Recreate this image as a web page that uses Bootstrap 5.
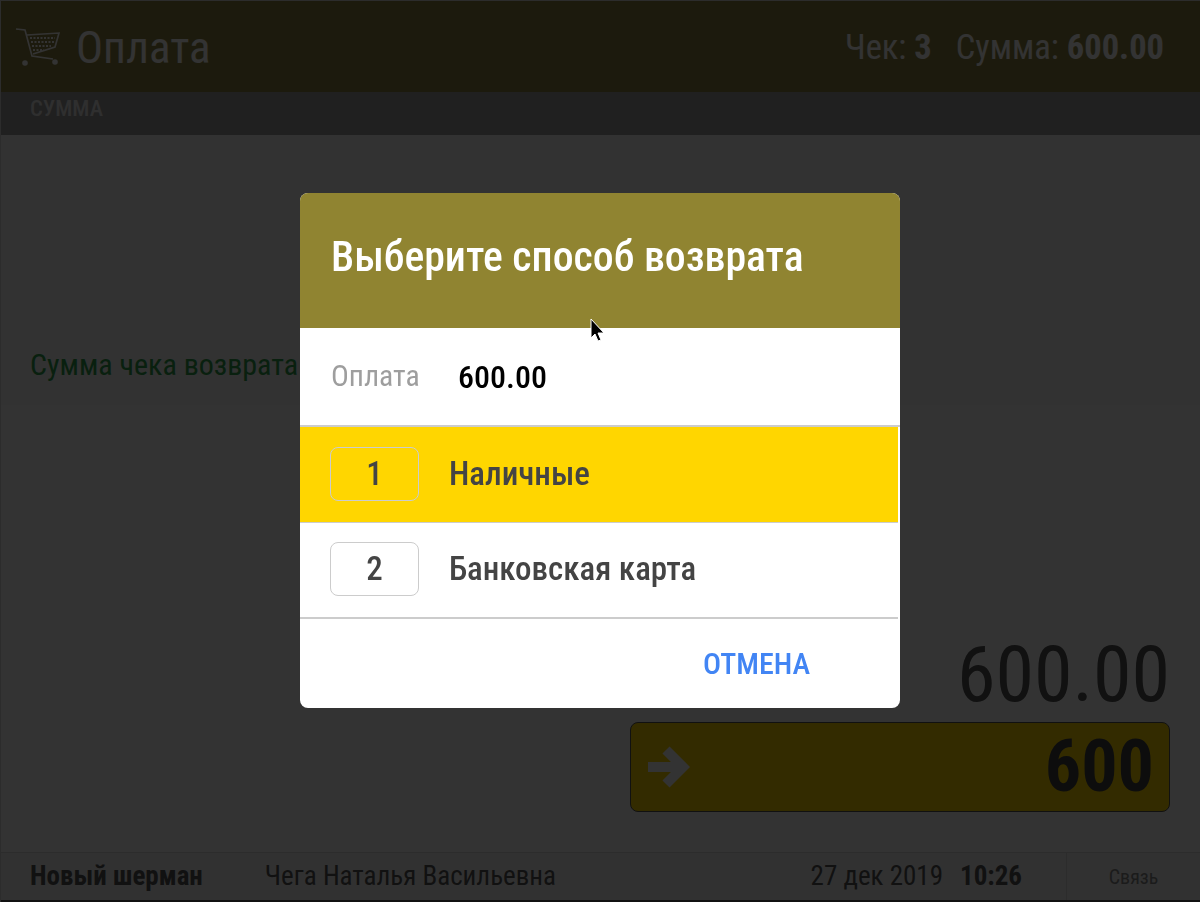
<!DOCTYPE html>
<html lang="ru">
<head>
  <meta charset="UTF-8">
  <meta name="viewport" content="width=device-width, initial-scale=1.0">
  <title>Оплата</title>
  <link href="https://cdn.jsdelivr.net/npm/bootstrap@5.3.0/dist/css/bootstrap.min.css" rel="stylesheet">
  <style>
    html, body { height: 100%; }
    body { font-family: "Roboto Condensed", Roboto, "Liberation Sans", sans-serif; font-stretch: condensed; background: #fff; overflow: hidden; }
    .pay-page { height: 902px; border-top: 1px solid #ddd; border-left: 1px solid #ddd; }
    .pay-top { height: 91px; background: #8e8441; color: #fff; padding: 3px 36px 0 14px; font-size: 34.5px; }
    .pay-top svg { width: 46px; height: 38px; margin-top: -3px; }
    .pay-title { font-size: 45px; margin-left: 15px; }
    .pay-tab { height: 43px; background: #9e9e9e; color: #e8e8e8; padding: 0 0 10px 29px; font-size: 22.6px; font-weight: 500; }
    .pay-upper { height: 270px; padding: 0 29px 18px; background: #f8f8f8; }
    .pay-hint { color: #2e9e4a; font-size: 30px; }
    .pay-lower { padding: 0 30px 40px; background: #fff; }
    .pay-amount { font-size: 78px; line-height: 1; color: #555; }
    .pay-input { width: 540px; height: 90px; background: #ffd600; border: 1px solid #555; border-radius: 8px; padding: 0 15px; }
    .pay-input b { font-size: 72px; color: #444; font-weight: 700; }
    .pay-foot { height: 50px; background: #f5f5f5; border-top: 1px solid #ddd; border-bottom: 2px solid #555; color: #555; padding-left: 29px; font-size: 27px; }
    .pay-name { margin-right: 62px; }
    .pay-time { margin: 0 44px 0 17px; }
    .pay-link { width: 134px; border-left: 1px solid #ddd; font-size: 20px; color: #888; }
    .pay-backdrop { position: fixed; inset: 0; background: rgba(0,0,0,.8); }
    .pay-dialog { position: fixed; left: 300px; top: 193px; width: 600px; height: 515px; background: #fff; border-radius: 8px; overflow: hidden; }
    .pay-dialog-head { height: 135px; background: #908431; color: #fff; font-size: 41.8px; font-weight: 500; padding: 0 0 6px 31px; }
    .pay-sum { height: 99px; padding-left: 31px; border-bottom: 2px solid #ccc; }
    .pay-sum span { width: 127px; color: #9e9e9e; font-size: 29.7px; }
    .pay-sum b { font-size: 32px; color: #000; font-weight: 500; }
    .pay-opt { height: 96px; width: 598px; padding: 0 0 2px 30px; font-size: 33px; font-weight: 500; color: #444; border-bottom: 2px solid #ccc; }
    .pay-opt.is-on { background: #ffd600; border-bottom-width: 1px; }
    .pay-key { width: 89px; height: 54px; margin-right: 30px; border: 1px solid #ccc; border-radius: 8px; }
    .pay-cancel { flex: 1; padding-left: 403px; color: #4285f4; font-size: 30px; font-weight: 500; }
    .pay-cursor { position: fixed; left: 590px; top: 318px; width: 15px; height: 25px; }
  </style>
</head>
<body>
  <div class="pay-page d-flex flex-column">
    <div class="pay-top d-flex align-items-center">
      <svg viewBox="0 0 46 38" fill="none" stroke="#fff" stroke-width="1.6">
        <path d="M1 1l9 1 7 26 21 3"/>
        <path d="M12 7l32-2-4 14-22 7"/>
        <path d="M15 10h25M16 14h23M17 18h19M18 22h11" stroke-dasharray="2 1.5" stroke-width="2"/>
        <circle cx="10" cy="35" r="2" fill="#fff"/><circle cx="40" cy="34" r="2" fill="#fff"/>
      </svg>
      <div class="pay-title">Оплата</div>
      <div class="ms-auto d-flex gap-4">
        <div>Чек: <b>3</b></div>
        <div>Сумма: <b>600.00</b></div>
      </div>
    </div>
    <div class="pay-tab d-flex align-items-center">СУММА</div>
    <div class="pay-upper d-flex align-items-end">
      <div class="pay-hint">Сумма чека возврата</div>
    </div>
    <div class="pay-lower flex-grow-1 d-flex flex-column align-items-end justify-content-end">
      <div class="pay-amount mb-2">600.00</div>
      <div class="pay-input d-flex align-items-center justify-content-between">
        <svg width="44" height="44" viewBox="0 0 44 44" fill="none" stroke="#fff" stroke-width="10" stroke-linejoin="miter"><path d="M2 22h32M20 5l17 17-17 17"/></svg>
        <b>600</b>
      </div>
    </div>
    <div class="pay-foot d-flex align-items-center">
      <b class="pay-name">Новый шерман</b>
      <span>Чега Наталья Васильевна</span>
      <span class="ms-auto">27 дек 2019</span>
      <b class="pay-time">10:26</b>
      <div class="pay-link h-100 d-flex align-items-center justify-content-center">Связь</div>
    </div>
  </div>

  <div class="pay-backdrop"></div>

  <div class="pay-dialog d-flex flex-column">
    <div class="pay-dialog-head d-flex align-items-center">Выберите способ возврата</div>
    <div class="pay-sum d-flex align-items-center"><span>Оплата</span><b>600.00</b></div>
    <div class="pay-opt is-on d-flex align-items-center"><div class="pay-key d-flex align-items-center justify-content-center">1</div>Наличные</div>
    <div class="pay-opt d-flex align-items-center"><div class="pay-key d-flex align-items-center justify-content-center">2</div>Банковская карта</div>
    <div class="pay-cancel d-flex align-items-center">ОТМЕНА</div>
  </div>

  <svg class="pay-cursor" viewBox="0 0 15 25"><path d="M1 1v19l4-4 3 7 3-1-3-7h6z" fill="#000" stroke="#fff" stroke-width="1"/></svg>

  <script src="https://cdn.jsdelivr.net/npm/bootstrap@5.3.0/dist/js/bootstrap.bundle.min.js"></script>
</body>
</html>
